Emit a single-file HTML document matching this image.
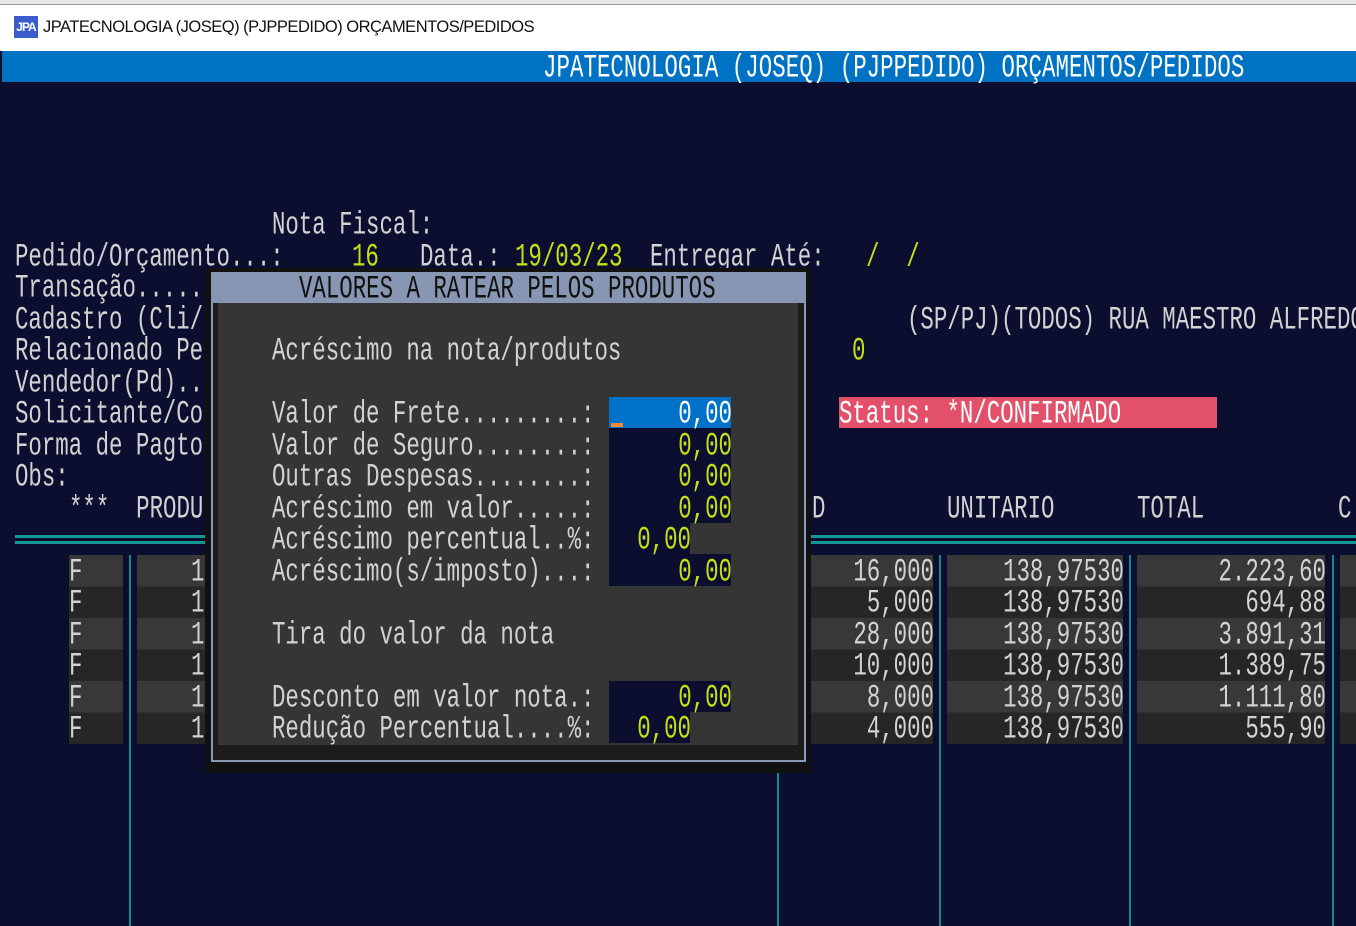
<!DOCTYPE html>
<html><head><meta charset="utf-8"><style>
*{margin:0;padding:0;box-sizing:border-box}
body{width:1356px;height:926px;overflow:hidden;background:#0c0e30;position:relative;font-family:"Liberation Mono",monospace}
.t{position:absolute;height:32px;line-height:32px;font-size:22.4px;color:#d2d2d2;white-space:pre;transform:scaleY(1.45);transform-origin:50% 50%}
.y{color:#c4e014}
.r{text-align:right}
.b{position:absolute}
.st{background:repeating-linear-gradient(#383838 0 31.5px,#262626 31.5px 63px)}
</style></head><body>
<div class="b" style="left:0;top:0;width:1356px;height:5px;background:#e8e8e8"></div>
<div class="b" style="left:0;top:4px;width:1356px;height:47px;background:#fff;border-top:1px solid #999"></div>
<div class="b" style="left:14px;top:16px;width:24px;height:22px;background:#3a5ccc;color:#fff;font:bold 12px 'Liberation Sans',sans-serif;line-height:22px;text-align:center;letter-spacing:-1px">JPA</div>
<div class="b" style="left:43px;top:18px;font:16.5px 'Liberation Sans',sans-serif;color:#111;letter-spacing:-0.5px">JPATECNOLOGIA (JOSEQ) (PJPPEDIDO) ORÇAMENTOS/PEDIDOS</div>
<div class="b" style="left:2px;top:51px;width:1354px;height:31px;background:#0072c4"></div>
<div class="t" style="left:543px;top:52px;color:#fff;letter-spacing:0.05px">JPATECNOLOGIA (JOSEQ) (PJPPEDIDO) ORÇAMENTOS/PEDIDOS</div>

<div class="t" style="left:272px;top:209px">Nota Fiscal:</div>
<div class="t" style="left:15px;top:241px">Pedido/Orçamento...:</div>
<div class="t y" style="left:352px;top:241px">16</div>
<div class="t" style="left:420px;top:241px">Data.:</div>
<div class="t y" style="left:515px;top:241px">19/03/23</div>
<div class="t" style="left:650px;top:241px">Entregar Até:</div>
<div class="t y" style="left:866px;top:241px">/  /</div>
<div class="t" style="left:15px;top:272px">Transação.....</div>
<div class="t" style="left:15px;top:304px">Cadastro (Cli/</div>
<div class="t" style="left:907px;top:304px">(SP/PJ)(TODOS) RUA MAESTRO ALFREDO</div>
<div class="t" style="left:15px;top:335px">Relacionado Pe</div>
<div class="t y" style="left:852px;top:335px">0</div>
<div class="t" style="left:15px;top:367px">Vendedor(Pd)..</div>
<div class="t" style="left:15px;top:398px">Solicitante/Co</div>
<div class="b" style="left:839px;top:397px;width:378px;height:31px;background:#e2506a"></div>
<div class="t" style="left:839px;top:398px;color:#fff">Status: *N/CONFIRMADO</div>
<div class="t" style="left:15px;top:430px">Forma de Pagto</div>
<div class="t" style="left:15px;top:461px">Obs:</div>
<div class="t" style="left:69px;top:493px">***  PRODU</div>
<div class="t" style="left:812px;top:493px">D</div>
<div class="t" style="left:947px;top:493px">UNITARIO</div>
<div class="t" style="left:1137px;top:493px">TOTAL</div>
<div class="t" style="left:1338px;top:493px">C</div>

<div class="b" style="left:15px;top:535px;width:1341px;height:3px;background:#149a96"></div>
<div class="b" style="left:15px;top:541px;width:1341px;height:3px;background:#149a96"></div>
<div class="b" style="left:129px;top:555px;width:2px;height:371px;background:#138a8a"></div>
<div class="b" style="left:777px;top:555px;width:2px;height:371px;background:#138a8a"></div>
<div class="b" style="left:939px;top:555px;width:2px;height:371px;background:#138a8a"></div>
<div class="b" style="left:1129px;top:555px;width:2px;height:371px;background:#138a8a"></div>
<div class="b" style="left:1332px;top:555px;width:2px;height:371px;background:#138a8a"></div>

<div class="b st" style="left:69px;top:555px;width:54px;height:189px"></div>
<div class="b st" style="left:137px;top:555px;width:70px;height:189px"></div>
<div class="b st" style="left:790px;top:555px;width:143px;height:189px"></div>
<div class="b st" style="left:947px;top:555px;width:176px;height:189px"></div>
<div class="b st" style="left:1137px;top:555px;width:188px;height:189px"></div>
<div class="b st" style="left:1340px;top:555px;width:16px;height:189px"></div>

<div class="t" style="left:69px;top:556px">F</div>
<div class="t" style="left:69px;top:587px">F</div>
<div class="t" style="left:69px;top:619px">F</div>
<div class="t" style="left:69px;top:650px">F</div>
<div class="t" style="left:69px;top:682px">F</div>
<div class="t" style="left:69px;top:713px">F</div>
<div class="t" style="left:191px;top:556px">1</div>
<div class="t" style="left:191px;top:587px">1</div>
<div class="t" style="left:191px;top:619px">1</div>
<div class="t" style="left:191px;top:650px">1</div>
<div class="t" style="left:191px;top:682px">1</div>
<div class="t" style="left:191px;top:713px">1</div>

<div class="t r" style="left:780px;width:154px;top:556px">16,000</div>
<div class="t r" style="left:780px;width:154px;top:587px">5,000</div>
<div class="t r" style="left:780px;width:154px;top:619px">28,000</div>
<div class="t r" style="left:780px;width:154px;top:650px">10,000</div>
<div class="t r" style="left:780px;width:154px;top:682px">8,000</div>
<div class="t r" style="left:780px;width:154px;top:713px">4,000</div>
<div class="t r" style="left:940px;width:184px;top:556px">138,97530</div>
<div class="t r" style="left:940px;width:184px;top:587px">138,97530</div>
<div class="t r" style="left:940px;width:184px;top:619px">138,97530</div>
<div class="t r" style="left:940px;width:184px;top:650px">138,97530</div>
<div class="t r" style="left:940px;width:184px;top:682px">138,97530</div>
<div class="t r" style="left:940px;width:184px;top:713px">138,97530</div>
<div class="t r" style="left:1130px;width:196px;top:556px">2.223,60</div>
<div class="t r" style="left:1130px;width:196px;top:587px">694,88</div>
<div class="t r" style="left:1130px;width:196px;top:619px">3.891,31</div>
<div class="t r" style="left:1130px;width:196px;top:650px">1.389,75</div>
<div class="t r" style="left:1130px;width:196px;top:682px">1.111,80</div>
<div class="t r" style="left:1130px;width:196px;top:713px">555,90</div>

<!-- dialog -->
<div class="b" style="left:205px;top:268px;width:606px;height:505px;background:#111"></div>
<div class="b" style="left:211px;top:272px;width:595px;height:490px;background:#1c1c1c;border:2px solid #8a9ab4;border-top:none"></div>
<div class="b" style="left:211px;top:272px;width:595px;height:31px;background:#8796b2"></div>
<div class="t" style="left:299px;top:273px;color:#111">VALORES A RATEAR PELOS PRODUTOS</div>
<div class="b" style="left:218px;top:303px;width:580px;height:442px;background:#353535"></div>
<div class="t" style="left:272px;top:335px">Acréscimo na nota/produtos</div>
<div class="t" style="left:272px;top:398px">Valor de Frete.........:</div>
<div class="t" style="left:272px;top:430px">Valor de Seguro........:</div>
<div class="t" style="left:272px;top:461px">Outras Despesas........:</div>
<div class="t" style="left:272px;top:493px">Acréscimo em valor.....:</div>
<div class="t" style="left:272px;top:524px">Acréscimo percentual..%:</div>
<div class="t" style="left:272px;top:556px">Acréscimo(s/imposto)...:</div>
<div class="t" style="left:272px;top:619px">Tira do valor da nota</div>
<div class="t" style="left:272px;top:682px">Desconto em valor nota.:</div>
<div class="t" style="left:272px;top:713px">Redução Percentual....%:</div>
<div class="b" style="left:609px;top:397px;width:122px;height:126px;background:#0c0e30"></div>
<div class="b" style="left:609px;top:397px;width:122px;height:31px;background:#0072c8"></div>
<div class="b" style="left:611px;top:423px;width:12px;height:4px;background:#f08a30"></div>
<div class="b" style="left:609px;top:523px;width:81px;height:31px;background:#0c0e30"></div>
<div class="b" style="left:609px;top:554px;width:122px;height:32px;background:#0c0e30"></div>
<div class="b" style="left:609px;top:681px;width:122px;height:31px;background:#0c0e30"></div>
<div class="b" style="left:609px;top:712px;width:81px;height:31px;background:#0c0e30"></div>
<div class="t r" style="left:600px;width:132px;top:398px;color:#fff">0,00</div>
<div class="t r y" style="left:600px;width:132px;top:430px">0,00</div>
<div class="t r y" style="left:600px;width:132px;top:461px">0,00</div>
<div class="t r y" style="left:600px;width:132px;top:493px">0,00</div>
<div class="t r y" style="left:600px;width:91px;top:524px">0,00</div>
<div class="t r y" style="left:600px;width:132px;top:556px">0,00</div>
<div class="t r y" style="left:600px;width:132px;top:682px">0,00</div>
<div class="t r y" style="left:600px;width:91px;top:713px">0,00</div>
</body></html>
